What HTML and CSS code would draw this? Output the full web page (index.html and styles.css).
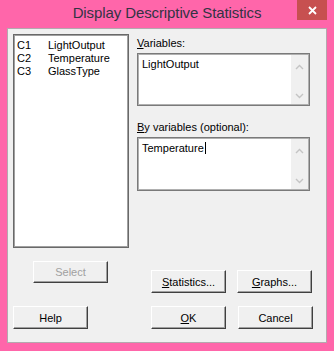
FILE: index.html
```html
<!DOCTYPE html>
<html lang="en">

<head>
    <meta charset="UTF-8">
    <title>Display Descriptive Statistics</title>
    <link rel="stylesheet" href="styles.css">
</head>

<body>
    <div class="window">
        <!--title bar with the close box-->
        <div class="titlebar">
            <span></span>
            <h1 class="title">Display Descriptive Statistics</h1>
            <button class="close" type="button">
                <svg width="9" height="9" viewBox="0 0 9 9">
                    <path d="M1 1 L8 8 M8 1 L1 8" stroke="#fff" stroke-width="1.8" fill="none" />
                </svg>
            </button>
        </div>

        <div class="client">
            <div class="top">
                <!--list of worksheet columns-->
                <div class="varlist">
                    <div class="item"><span class="col_id">C1</span><span>LightOutput</span></div>
                    <div class="item"><span class="col_id">C2</span><span>Temperature</span></div>
                    <div class="item"><span class="col_id">C3</span><span>GlassType</span></div>
                </div>

                <div class="fields">
                    <label class="lbl"><u>V</u>ariables:</label>
                    <div class="box">
                        <div class="box_text">LightOutput</div>
                        <div class="scroll">
                            <svg width="9" height="6" viewBox="0 0 9 6"><path d="M1 5 L4.5 1.5 L8 5" stroke="#c4c4c4" stroke-width="1.4" fill="none" /></svg>
                            <svg width="9" height="6" viewBox="0 0 9 6"><path d="M1 1 L4.5 4.5 L8 1" stroke="#c4c4c4" stroke-width="1.4" fill="none" /></svg>
                        </div>
                    </div>

                    <label class="lbl lbl_by"><u>B</u>y variables (optional):</label>
                    <div class="box box_by">
                        <div class="box_text"><span class="caret">Temperature</span></div>
                        <div class="scroll">
                            <svg width="9" height="6" viewBox="0 0 9 6"><path d="M1 5 L4.5 1.5 L8 5" stroke="#c4c4c4" stroke-width="1.4" fill="none" /></svg>
                            <svg width="9" height="6" viewBox="0 0 9 6"><path d="M1 1 L4.5 4.5 L8 1" stroke="#c4c4c4" stroke-width="1.4" fill="none" /></svg>
                        </div>
                    </div>
                </div>
            </div>

            <div class="btn_row row1">
                <button class="btn btn_select" type="button" disabled>Select</button>
                <button class="btn btn_stats" type="button"><u>S</u>tatistics...</button>
                <button class="btn btn_graphs" type="button"><u>G</u>raphs...</button>
            </div>

            <div class="btn_row row2">
                <button class="btn" type="button">Help</button>
                <button class="btn btn_ok" type="button"><u>O</u>K</button>
                <button class="btn btn_cancel" type="button">Cancel</button>
            </div>
        </div>
    </div>
</body>

</html>
```

FILE: styles.css
```css
* {
    margin: 0px;
    padding: 0px;
    box-sizing: border-box;
}

body {
    background: #ff66aa;
    font-family: "Liberation Sans", Arial, sans-serif;
    font-size: 11px;
    color: #000;
}

.window {
    width: 334px;
    height: 351px;
    background: #ff66aa;
    padding: 0 7px 8px 7px;
}

.titlebar {
    height: 28px;
    display: grid;
    grid-template-columns: 1fr auto 1fr;
}

.title {
    font-size: 15px;
    font-weight: normal;
    letter-spacing: -0.1px;
    line-height: 26px;
    color: #333344;
    white-space: nowrap;
}

.close {
    justify-self: end;
    width: 30px;
    height: 20px;
    background: #c75050;
    border: none;
    display: flex;
    align-items: center;
    justify-content: center;
}

.client {
    width: 320px;
    height: 315px;
    background: #f0f0f0;
    border: 1px solid #b4a8ae;
    padding: 5px;
}

.top {
    display: flex;
    gap: 8px;
}

/*column list on the left*/
.varlist {
    width: 116px;
    height: 214px;
    background: #fff;
    border: 1px solid #696969;
    box-shadow: inset 0 0 0 1px #a0a0a0;
    padding: 4px 3px;
}

.item {
    display: flex;
    line-height: 13px;
}

.col_id {
    width: 31px;
}

.fields {
    width: 173px;
    display: flex;
    flex-direction: column;
}

.lbl {
    line-height: 13px;
    margin-top: 3px;
    margin-bottom: 3px;
}

.lbl_by {
    margin-top: 15px;
}

.box {
    height: 53px;
    background: #fff;
    border: 1px solid #7a7a7a;
    box-shadow: inset 0 0 0 1px #b0b0b0;
    display: flex;
    padding: 1px;
}

.box_by {
    height: 54px;
}

.box_text {
    flex: 1;
    line-height: 13px;
    padding: 3px 3px;
}

.caret {
    border-right: 1px solid #000;
    padding-right: 1px;
}

.scroll {
    width: 17px;
    background: #f0f0f0;
    display: flex;
    flex-direction: column;
    align-items: center;
    justify-content: space-between;
    padding: 9px 0 5px 0;
}

/*classic raised buttons*/
.btn_row {
    display: flex;
    align-items: flex-start;
}

.row1 {
    margin-top: 13px;
}

.row2 {
    margin-top: 13px;
}

.btn {
    width: 75px;
    height: 23px;
    background: #f0f0f0;
    border: 1px solid;
    border-color: #fff #404040 #404040 #fff;
    box-shadow: inset -1px -1px 0 #a0a0a0;
    font-family: "Liberation Sans", Arial, sans-serif;
    font-size: 11px;
    color: #000;
}

.btn_select {
    margin-left: 20px;
    height: 22px;
    color: #a0a0a0;
}

.btn_stats {
    margin-left: 43px;
    margin-top: 9px;
}

.btn_graphs {
    margin-left: 11px;
    margin-top: 9px;
}

.btn_ok {
    margin-left: 63px;
}

.btn_cancel {
    margin-left: 12px;
}
```
